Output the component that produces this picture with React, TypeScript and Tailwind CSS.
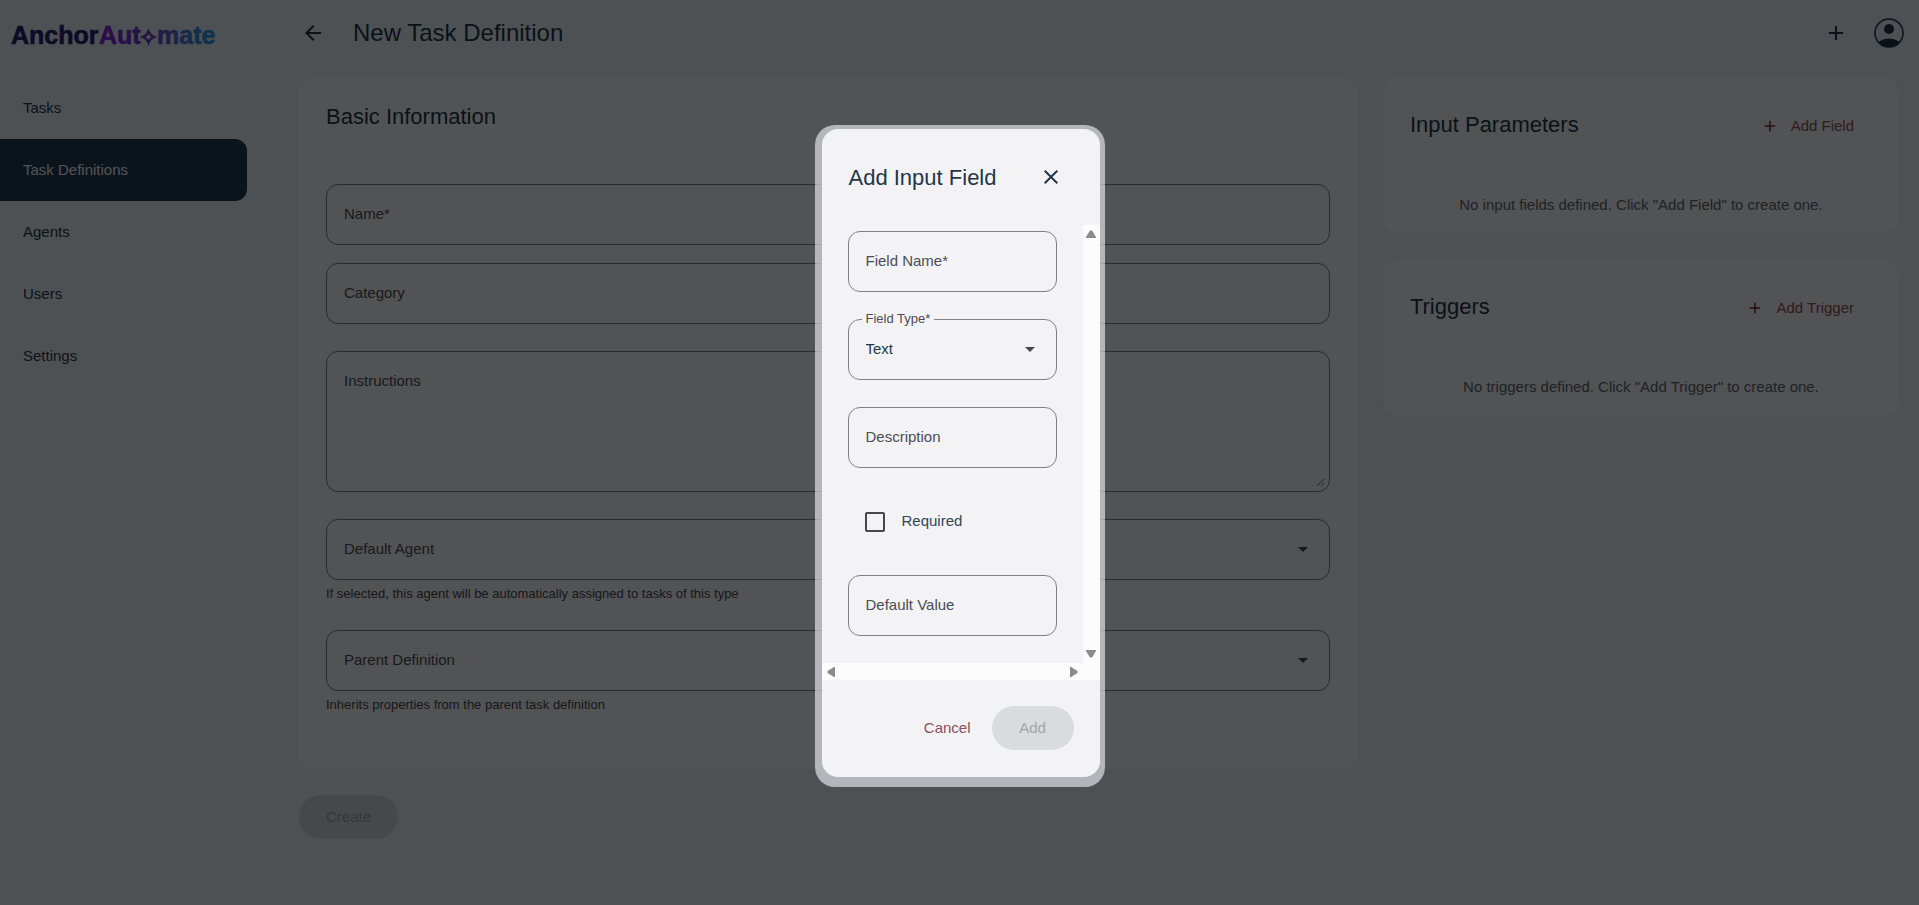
import { ReactNode, useId } from "react";
import { MdAdd, MdArrowBack, MdArrowDropDown, MdClose } from "react-icons/md";

const navItems = ["Tasks", "Task Definitions", "Agents", "Users", "Settings"];

const Logo = () => (
  <svg
    viewBox="0 0 210 32"
    className="h-8 w-[210px]"
    role="img"
    aria-label="AnchorAutomate">
    <defs>
      <linearGradient
        id="logo"
        gradientUnits="userSpaceOnUse"
        x1="90"
        y1="0"
        x2="206"
        y2="0">
        <stop offset="0" stopColor="#8a22dc" />
        <stop offset="0.4" stopColor="#6a38cc" />
        <stop offset="0.65" stopColor="#5468d4" />
        <stop offset="1" stopColor="#22a0e4" />
      </linearGradient>
    </defs>
    <g
      fontFamily="'Liberation Sans', Arial, sans-serif"
      fontWeight="700"
      fontSize="25"
      strokeWidth="0.6">
      <text x="1" y="25" fill="#2a2070" stroke="#2a2070">
        Anchor
      </text>
      <text x="89" y="25" fill="url(#logo)" stroke="url(#logo)">
        Aut
      </text>
      <text x="147" y="25" fill="url(#logo)" stroke="url(#logo)">
        mate
      </text>
    </g>
    <path
      d="M138.500 12.500q1.500 4 5.500 5.500q-4 1.500-5.500 5.500q-1.500-4-5.500-5.500q4-1.500 5.500-5.500z"
      fill="none"
      stroke="url(#logo)"
      strokeWidth="2.500"
    />
  </svg>
);

const AccountIcon = () => (
  <svg viewBox="0 0 30 30" className="size-[30px]">
    <defs>
      <clipPath id="account">
        <circle cx="15" cy="15" r="14" />
      </clipPath>
    </defs>
    <circle
      cx="15"
      cy="15"
      r="14"
      fill="none"
      stroke="currentColor"
      strokeWidth="1.500"
    />
    <circle cx="15" cy="11" r="5" fill="currentColor" />
    <ellipse
      cx="15"
      cy="28"
      rx="12"
      ry="7.500"
      fill="currentColor"
      clipPath="url(#account)"
    />
  </svg>
);

const fieldBox = "w-full rounded-xl border border-[#7f7f84]";
const fieldText =
  "bg-transparent text-[15px] text-[#1f3747] placeholder:text-[#4c4c54] placeholder:opacity-100";

const TextField = ({ label }: { label: string }) => (
  <input
    type="text"
    aria-label={label}
    placeholder={label}
    className={`${fieldBox} ${fieldText} block h-[61px] px-[17px] pb-0.5`}
  />
);

const TextAreaField = ({ label }: { label: string }) => (
  <div className={`${fieldBox} pr-1 pb-1`}>
    <textarea
      aria-label={label}
      placeholder={label}
      className={`${fieldText} block h-[135px] w-full resize-y px-[17px] pt-[18px]`}
    />
  </div>
);

interface SelectFieldProps {
  label: string;
  value?: string;
  hint?: string;
}

const SelectField = ({ label, value, hint }: SelectFieldProps) => {
  const id = useId();

  return (
    <div>
      <div className="relative">
        {value && (
          <label
            htmlFor={id}
            className="absolute -top-2 left-[14px] bg-[#f3f3f6] px-1 text-[13px] leading-4 text-[#4c4c54]">
            {label}
          </label>
        )}
        <select
          id={id}
          aria-label={label}
          className={`${fieldBox} block h-[61px] appearance-none bg-transparent px-[17px] text-[15px] ${value ? "text-[#1f3747]" : "text-[#4c4c54]"}`}>
          <option>{value ?? label}</option>
        </select>
        <MdArrowDropDown className="pointer-events-none absolute top-[18px] right-[15px] size-6 text-[#46464f]" />
      </div>
      {hint && (
        <p className="pt-1 text-[13px] leading-[19px] text-[#46464f]">{hint}</p>
      )}
    </div>
  );
};

interface SideCardProps {
  title: string;
  action: string;
  children: ReactNode;
}

const SideCard = ({ title, action, children }: SideCardProps) => (
  <section className="rounded-2xl bg-[#f1f3f9] px-[27px] pt-6 pb-4">
    <div className="flex h-11 items-center justify-between">
      <h2 className="text-[22px]">{title}</h2>
      <button
        type="button"
        className="flex items-center gap-3 pt-1 pr-[18px] text-[15px] text-[#8c5056]">
        <MdAdd className="size-[18px] text-[#7a2730]" />
        {action}
      </button>
    </div>
    <p className="pt-[50px] pb-[3px] text-center text-[15px] leading-[18px] text-[#5a6570]">
      {children}
    </p>
  </section>
);

const AddFieldDialog = () => (
  <div className="fixed inset-0 flex items-start justify-center bg-black/66 pt-[125px]">
    <div
      role="dialog"
      aria-modal="true"
      aria-labelledby="dialog-title"
      className="rounded-[20px] bg-[#f3f9ff]/60 pt-1 pr-[5px] pb-2.5 pl-[7px]">
      <div className="w-[278px] rounded-2xl bg-[#f3f3f6]">
        <header className="flex h-24 items-center justify-between pr-[37px] pl-[27px]">
          <h2 id="dialog-title" className="text-[22px]">
            Add Input Field
          </h2>
          <button type="button" aria-label="Close">
            <MdClose className="size-6" />
          </button>
        </header>

        <div className="flex">
          <div className="flex-1 px-[26px] pt-1.5 pb-[27px]">
            <div className="flex flex-col gap-[27px]">
              <TextField label="Field Name*" />
              <SelectField label="Field Type*" value="Text" />
              <TextField label="Description" />
            </div>
            <label className="flex h-[107px] items-center gap-[17px] pl-[17px] text-[15px] text-[#304656]">
              <input
                type="checkbox"
                className="size-5 appearance-none rounded-xs border-2 border-[#46464f]"
              />
              Required
            </label>
            <TextField label="Default Value" />
          </div>
          <div className="flex w-[17px] flex-col items-center justify-between bg-[#fcfcfc] py-[5px]">
            <svg viewBox="0 0 10 8" className="h-2 w-2.5 fill-[#8b8b8b]">
              <path d="M4 0.500h2L10 7v1H0V7z" />
            </svg>
            <svg viewBox="0 0 10 8" className="h-2 w-2.5 fill-[#8b8b8b]">
              <path d="M4 7.500h2L10 1V0H0v1z" />
            </svg>
          </div>
        </div>
        <div className="flex h-[17px] items-center justify-between bg-[#fcfcfc] pr-[22px] pl-[5px]">
          <svg viewBox="0 0 8 10" className="h-2.5 w-2 fill-[#8b8b8b]">
            <path d="M0.500 4v2L7 10h1V0H7z" />
          </svg>
          <svg viewBox="0 0 8 10" className="h-2.5 w-2 fill-[#8b8b8b]">
            <path d="M7.500 4v2L1 10H0V0h1z" />
          </svg>
        </div>

        <footer className="flex items-center justify-end gap-[21px] pt-[26px] pr-[26px] pb-[27px] text-[15px]">
          <button type="button" className="text-[#8c5056]">
            Cancel
          </button>
          <button
            type="button"
            disabled
            className="h-11 w-[82px] rounded-full bg-[#d8dcdf] text-[#9fa5aa]">
            Add
          </button>
        </footer>
      </div>
    </div>
  </div>
);

export default function App() {
  return (
    <div className="flex min-h-screen bg-[#e3eef5] font-['Liberation_Sans',Arial,sans-serif] text-[#1f3747]">
      <aside className="w-[247px] shrink-0">
        <div className="flex h-[77px] items-start pt-[19px] pl-2.5">
          <Logo />
        </div>
        <nav>
          {navItems.map(item => (
            <a
              key={item}
              href="#"
              className={
                item === "Task Definitions"
                  ? "flex h-[62px] items-center rounded-r-xl bg-[#203d50] pl-[23px] text-[15px] text-[#f1f3f9]"
                  : "flex h-[62px] items-center pl-[23px] text-[15px]"
              }>
              {item}
            </a>
          ))}
        </nav>
      </aside>

      <main className="flex-1 pr-5 pl-[52px]">
        <header className="flex h-[78px] items-start pt-[18px]">
          <div className="flex h-[30px] flex-1 items-center gap-7 pl-0.5">
            <button type="button" aria-label="Back">
              <MdArrowBack className="size-6" />
            </button>
            <h1 className="text-2xl">New Task Definition</h1>
          </div>
          <div className="-mr-[5px] flex items-center gap-[26px]">
            <button type="button" aria-label="Add">
              <MdAdd className="size-6" />
            </button>
            <button type="button" aria-label="Account">
              <AccountIcon />
            </button>
          </div>
        </header>

        <div className="grid grid-cols-[41fr_20fr] items-start gap-[26px]">
          <section className="rounded-2xl bg-[#f1f3f9] px-[27px] pt-[26px] pb-[55px]">
            <h2 className="pb-[54px] text-[22px] leading-[26px]">
              Basic Information
            </h2>
            <div className="flex flex-col gap-[27px]">
              <div className="flex flex-col gap-[18px]">
                <TextField label="Name*" />
                <TextField label="Category" />
              </div>
              <TextAreaField label="Instructions" />
              <SelectField
                label="Default Agent"
                hint="If selected, this agent will be automatically assigned to tasks of this type"
              />
              <SelectField
                label="Parent Definition"
                hint="Inherits properties from the parent task definition"
              />
            </div>
          </section>

          <div className="flex flex-col gap-[27px]">
            <SideCard title="Input Parameters" action="Add Field">
              No input fields defined. Click "Add Field" to create one.
            </SideCard>
            <SideCard title="Triggers" action="Add Trigger">
              No triggers defined. Click "Add Trigger" to create one.
            </SideCard>
          </div>
        </div>

        <button
          type="button"
          disabled
          className="mt-[26px] h-11 w-[99px] rounded-full bg-[#cdd6dc] text-[15px] text-[#9aa4ab]">
          Create
        </button>
      </main>

      <AddFieldDialog />
    </div>
  );
}
